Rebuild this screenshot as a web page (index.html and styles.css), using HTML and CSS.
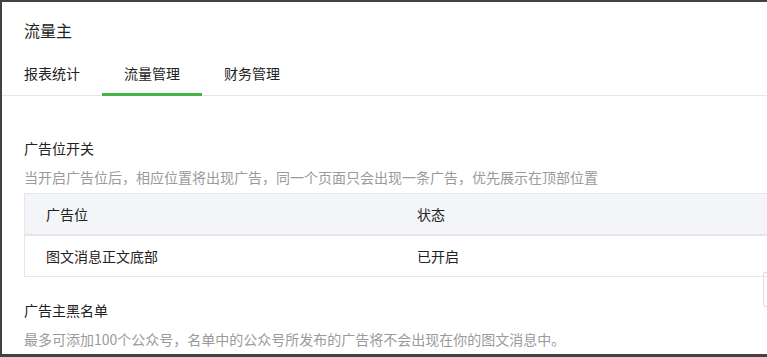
FILE: index.html
```html
<!DOCTYPE html>
<html lang="zh-CN">
<head>
<meta charset="utf-8">
<title>流量主</title>
<link rel="stylesheet" href="styles.css">
</head>
<body>
<div class="frame">
  <div class="page-title">流量主</div>
  <div class="tabs">
    <div class="tab">报表统计</div>
    <div class="tab active">流量管理</div>
    <div class="tab">财务管理</div>
  </div>
  <div class="section first">
    <div class="sec-title">广告位开关</div>
    <div class="sec-desc">当开启广告位后，相应位置将出现广告，同一个页面只会出现一条广告，优先展示在顶部位置</div>
    <table class="grid">
      <thead>
        <tr><th class="c1">广告位</th><th>状态</th></tr>
      </thead>
      <tbody>
        <tr><td class="c1">图文消息正文底部</td><td>已开启</td></tr>
      </tbody>
    </table>
  </div>
  <div class="section second">
    <div class="sec-title">广告主黑名单</div>
    <div class="sec-desc">最多可添加100个公众号，名单中的公众号所发布的广告将不会出现在你的图文消息中。</div>
  </div>
  <div class="float-box"></div>
</div>
</body>
</html>
```

FILE: styles.css
```css
html, body {
  margin: 0;
  padding: 0;
}
body {
  background: #424242;
  overflow: hidden;
  height: 357px;
  font-family: "Noto Sans CJK SC", "Noto Sans", sans-serif;
  font-size: 14px;
  color: #222;
}
.frame {
  margin: 2px 0 0 2px;
  height: 352px;
  background: #fff;
  position: relative;
  overflow: hidden;
}
.page-title {
  padding: 16px 0 0 22px;
  font-size: 16px;
  line-height: 24px;
  color: #222;
}
.tabs {
  display: flex;
  padding-top: 20px;
  border-bottom: 1px solid #e7e7eb;
}
.tab {
  width: 100px;
  text-align: center;
  line-height: 22px;
  padding-bottom: 9px;
  border-bottom: 3px solid transparent;
  margin-bottom: -1px;
  color: #222;
}
.tab.active {
  border-bottom-color: #44b549;
}
.section {
  padding-left: 22px;
}
.section.first {
  margin-top: 41px;
}
.section.second {
  margin-top: 22px;
}
.sec-title {
  line-height: 22px;
  color: #222;
}
.sec-desc {
  line-height: 22px;
  color: #9a9a9a;
  margin-top: 7px;
}
.grid {
  margin-top: 5px;
  width: 100%;
  border-collapse: collapse;
  border: 1px solid #e7e7eb;
  border-right: none;
}
.grid th, .grid td {
  text-align: left;
  font-weight: normal;
  height: 40px;
  padding: 0 0 0 21px;
  border-bottom: 1px solid #e7e7eb;
  color: #222;
}
.grid th {
  background: #f4f5f9;
  border-bottom: 2px solid #e4e5e9;
}
.grid .c1 {
  width: 350px;
}
.float-box {
  position: absolute;
  right: 0;
  top: 270px;
  width: 3px;
  height: 33px;
  border: 1px solid #dcdcdc;
  border-right: none;
  border-radius: 3px 0 0 3px;
}
```
